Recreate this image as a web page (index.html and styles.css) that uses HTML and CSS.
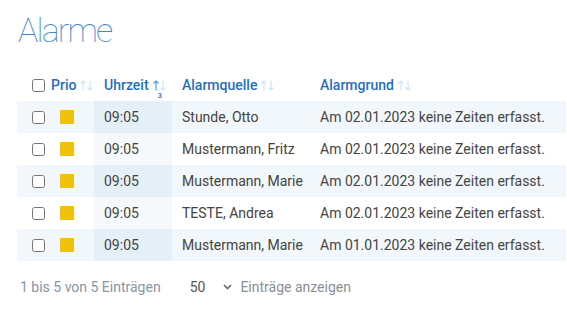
FILE: index.html
```html
<!DOCTYPE html>
<html lang="de">
<head>
<meta charset="utf-8">
<link rel="stylesheet" href="styles.css">
</head>
<body>
<h1 class="title">Alarme</h1>
<table class="grid">
  <thead>
    <tr>
      <th class="c-sel"><input type="checkbox"></th>
      <th class="c-prio">Prio<svg class="sort" width="13" height="11" viewBox="0 0 13 11"><path class="up" d="M3 10.5V1M0.5 3.5L3 1L5.5 3.5"/><path class="dn" d="M10 0.5V10M7.5 7.5L10 10L12.5 7.5"/></svg></th>
      <th class="c-time">Uhrzeit<span class="sortwrap"><svg class="sort active" width="13" height="11" viewBox="0 0 13 11"><path class="up" d="M3 10.5V1M0.5 3.5L3 1L5.5 3.5"/><path class="dn" d="M10 0.5V10M7.5 7.5L10 10L12.5 7.5"/></svg><span class="idx">3</span></span></th>
      <th class="c-src">Alarmquelle<svg class="sort" width="13" height="11" viewBox="0 0 13 11"><path class="up" d="M3 10.5V1M0.5 3.5L3 1L5.5 3.5"/><path class="dn" d="M10 0.5V10M7.5 7.5L10 10L12.5 7.5"/></svg></th>
      <th class="c-why">Alarmgrund<svg class="sort" width="13" height="11" viewBox="0 0 13 11"><path class="up" d="M3 10.5V1M0.5 3.5L3 1L5.5 3.5"/><path class="dn" d="M10 0.5V10M7.5 7.5L10 10L12.5 7.5"/></svg></th>
    </tr>
  </thead>
  <tbody>
    <tr><td class="c-sel"><input type="checkbox"></td><td class="c-prio"><span class="prio"></span></td><td class="c-time">09:05</td><td class="c-src">Stunde, Otto</td><td class="c-why">Am 02.01.2023 keine Zeiten erfasst.</td></tr>
    <tr><td class="c-sel"><input type="checkbox"></td><td class="c-prio"><span class="prio"></span></td><td class="c-time">09:05</td><td class="c-src">Mustermann, Fritz</td><td class="c-why">Am 02.01.2023 keine Zeiten erfasst.</td></tr>
    <tr><td class="c-sel"><input type="checkbox"></td><td class="c-prio"><span class="prio"></span></td><td class="c-time">09:05</td><td class="c-src">Mustermann, Marie</td><td class="c-why">Am 02.01.2023 keine Zeiten erfasst.</td></tr>
    <tr><td class="c-sel"><input type="checkbox"></td><td class="c-prio"><span class="prio"></span></td><td class="c-time">09:05</td><td class="c-src">TESTE, Andrea</td><td class="c-why">Am 02.01.2023 keine Zeiten erfasst.</td></tr>
    <tr><td class="c-sel"><input type="checkbox"></td><td class="c-prio"><span class="prio"></span></td><td class="c-time">09:05</td><td class="c-src">Mustermann, Marie</td><td class="c-why">Am 01.01.2023 keine Zeiten erfasst.</td></tr>
  </tbody>
</table>
<div class="footer">
  <span class="info">1 bis 5 von 5 Einträgen</span>
  <span class="length"><span class="num">50</span><svg class="chev" width="9" height="6" viewBox="0 0 9 6"><path d="M1 1 L4.5 4.5 L8 1" fill="none" stroke="#666" stroke-width="1.6"/></svg><span class="lbl">Einträge anzeigen</span></span>
</div>
</body>
</html>
```
FILE: styles.css
```css
html, body { margin: 0; padding: 0; background: #fff; }
body {
  font-family: Roboto, "Liberation Sans", sans-serif;
  color: #444;
  padding: 0 0 0 17px;
  overflow: hidden;
}
.title {
  margin: 0;
  padding: 10px 0 0 1px;
  height: 72px;
  box-sizing: border-box;
  font-size: 34px;
  font-weight: 100;
  letter-spacing: -1.8px;
  line-height: 40px;
  color: #3f86d0;
}
.grid {
  border-collapse: collapse;
  width: 549px;
  table-layout: fixed;
  font-size: 14px;
}
.grid th {
  height: 29px;
  padding: 0 0 3px 10px;
  text-align: left;
  font-weight: 500;
  color: #1f6fc0;
  white-space: nowrap;
  vertical-align: middle;
}
.grid td {
  height: 32px;
  padding: 0 0 0 10px;
  white-space: nowrap;
  vertical-align: middle;
}
.grid th.c-sel, .grid td.c-sel { width: 33px; padding-left: 15px; box-sizing: border-box; }
.grid th.c-prio { padding-left: 1px; }
.grid td.c-prio { padding-left: 10px; }
.c-prio { width: 44px; box-sizing: border-box; }
.c-time { width: 78px; box-sizing: border-box; }
.c-src { width: 138px; box-sizing: border-box; }
.c-why { box-sizing: border-box; }
.grid input[type=checkbox] {
  margin: 0;
  width: 13px;
  height: 13px;
  display: block;
}
.grid tbody tr:nth-child(odd) td { background: #f2f7fb; }
.grid tbody tr:nth-child(odd) td.c-time { background: #e5eff7; }
.grid tbody tr:nth-child(even) td.c-time { background: #f5f9fc; }
.prio {
  display: block;
  width: 14px;
  height: 14px;
  background: #f0c20b;
}
.sort {
  margin-left: 4px;
  vertical-align: -1px;
  fill: none;
  stroke: #d3e6f5;
  stroke-width: 1.3;
}
.sortwrap { position: relative; display: inline-block; }
.sort.active .up { stroke: #5aa3e6; }
.sortwrap .idx {
  position: absolute;
  left: 9px;
  top: 14px;
  font-size: 8px;
  font-weight: 500;
  color: #2a6fb5;
}
.footer {
  display: flex;
  align-items: center;
  padding: 18px 0 0 3px;
  font-size: 14px;
  color: #8796a8;
}
.length { display: flex; align-items: center; margin-left: 29px; }
.num { color: #555; }
.chev { margin-left: 18px; margin-right: 8px; }
.lbl { color: #8a8f96; }
```
